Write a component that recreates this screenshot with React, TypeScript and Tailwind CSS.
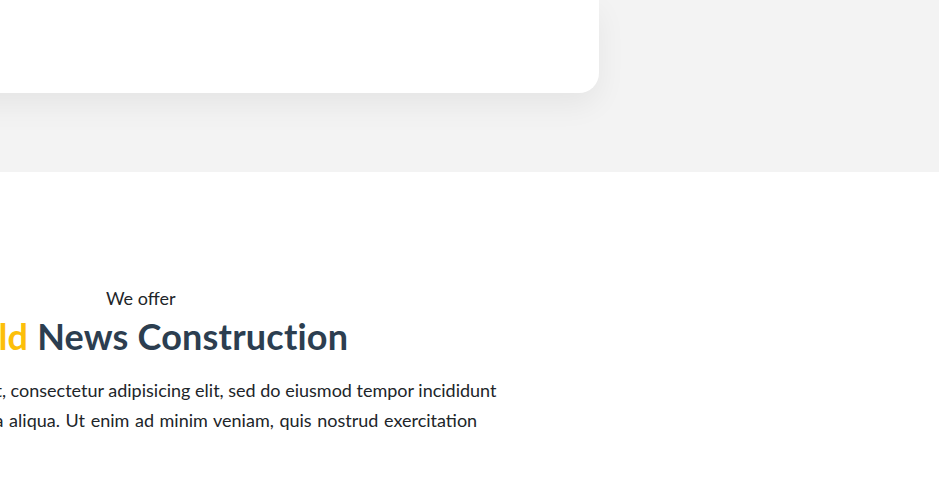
import React from 'react';

export default function App() {
  return (
    <div className="w-[939px] h-[490px] overflow-hidden bg-white font-['Lato',sans-serif]">
      {/* Top grey band with the bottom of the floating card */}
      <section className="bg-[#f3f3f3] h-[172px]">
        <div className="ml-[-120px] w-[719px] h-[93px] bg-white rounded-b-[20px] shadow-[0_12px_30px_rgba(0,0,0,0.06)]" />
      </section>

      {/* About section */}
      <section className="pt-[116px]">
        <div className="ml-[-240px] w-[780px]">
          <p className="pl-[346px] text-[18px] leading-[20px] text-[#212529]">We offer</p>
          <h2 className="mt-[8px] text-[36px] leading-[40px] font-bold text-[#2c3e50] whitespace-nowrap pl-[185px] tracking-[0.2px]">
            <span className="text-[#fcbf0a]">Build</span> News Construction
          </h2>
          <div className="mt-[19px] text-[18px] leading-[30px] text-[#212529] whitespace-nowrap">
            <p className="pl-[28px]">
              Lorem ipsum dolor sit amet, consectetur adipisicing elit, sed do eiusmod tempor incididunt
            </p>
            <p className="pl-[37px] [word-spacing:1px]">
              ut labore et dolore magna aliqua. Ut enim ad minim veniam, quis nostrud exercitation
            </p>
          </div>
        </div>
      </section>
    </div>
  );
}
